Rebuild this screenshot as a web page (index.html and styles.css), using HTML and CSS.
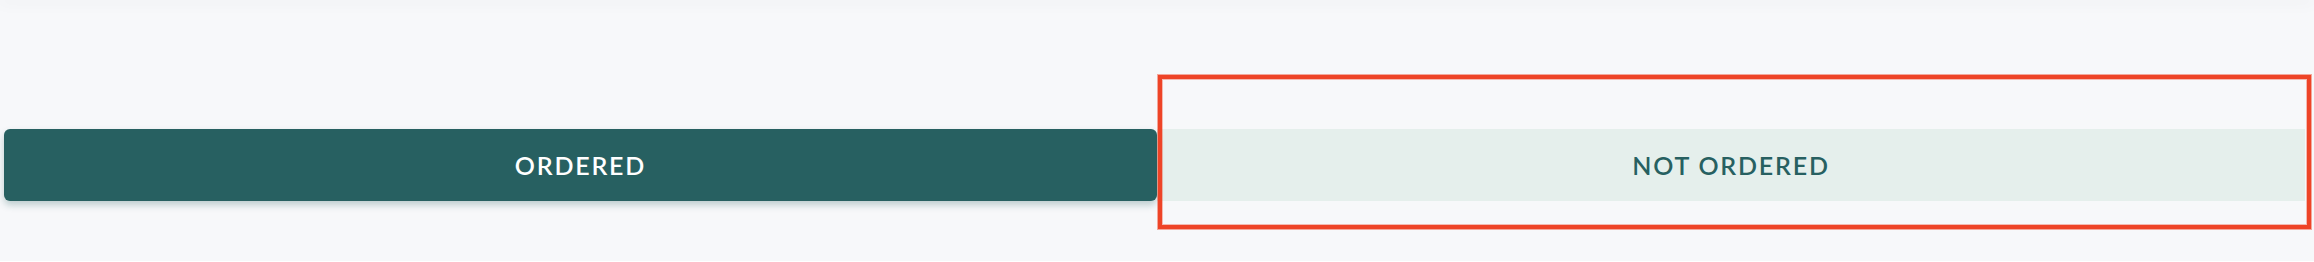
FILE: index.html
```html
<!DOCTYPE html>
<html lang="en">
<head>
<meta charset="utf-8">
<title>Order filter</title>
<link rel="stylesheet" href="styles.css">
</head>
<body>
<div class="page">
  <div class="topshade"></div>
  <div class="toggle">
    <button class="seg seg-active">ORDERED</button>
    <button class="seg seg-idle">NOT ORDERED</button>
    <div class="highlight"></div>
  </div>
</div>
</body>
</html>
```
FILE: styles.css
```css
html, body {
  margin: 0;
  padding: 0;
  background: #ffffff;
}
.page {
  position: relative;
  height: 261px;
  background: #f7f8fa;
  overflow: hidden;
  padding-top: 129px;
  box-sizing: border-box;
}
.topshade {
  position: absolute;
  left: 0;
  right: 0;
  top: 0;
  height: 0;
  box-shadow: 0 0 16px 2px rgba(0, 0, 0, 0.07);
}
.toggle {
  position: relative;
  display: flex;
  margin: 0 9px 0 4px;
  height: 72px;
}
.seg {
  flex: 0 0 auto;
  border: none;
  margin: 0;
  padding: 0;
  height: 72px;
  font-family: "Lato", "Open Sans", sans-serif;
  font-size: 25px;
  font-weight: 600;
  letter-spacing: 1.8px;
  cursor: pointer;
}
.seg-active {
  width: 1153px;
  background: #276061;
  color: #ffffff;
  border-radius: 6px;
  box-shadow: 0 4px 7px rgba(39, 96, 97, 0.28);
  position: relative;
  z-index: 1;
}
.seg-idle {
  flex: 1 1 auto;
  background: #e5efec;
  color: #276061;
}
.highlight {
  position: absolute;
  left: 1154px;
  top: -54px;
  width: 1153px;
  height: 154px;
  box-sizing: border-box;
  border: 4px solid #ee4427;
  box-shadow: 0 0 0 1px rgba(238, 68, 39, 0.45), inset 0 0 0 1px rgba(238, 68, 39, 0.35);
  pointer-events: none;
  z-index: 2;
}
```
